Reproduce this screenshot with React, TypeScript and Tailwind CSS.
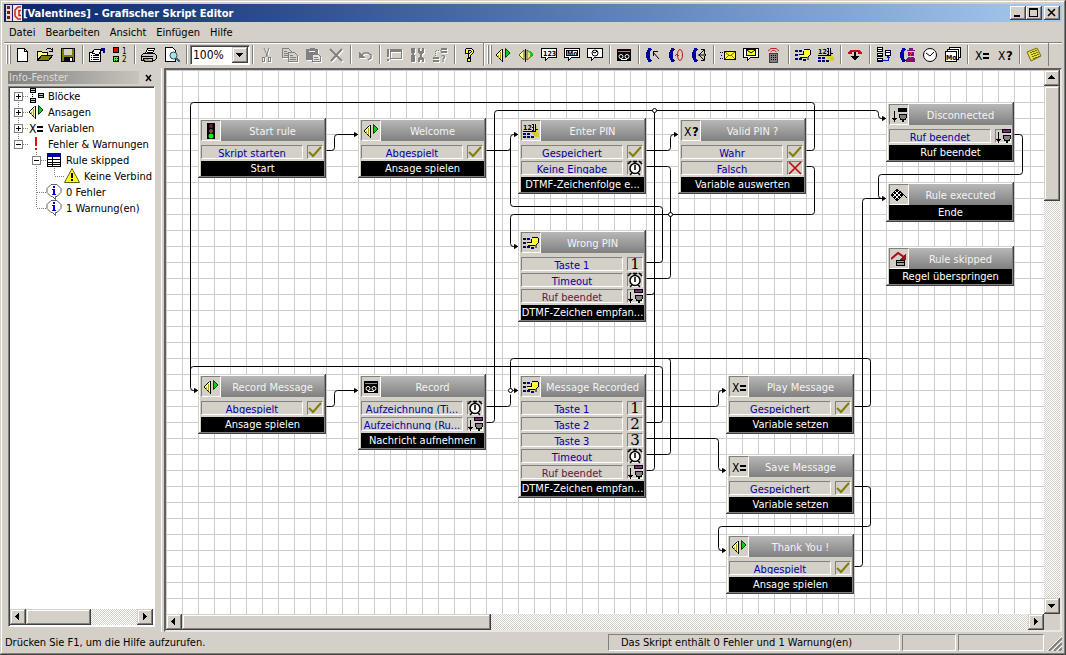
import { useState } from 'react'
import type { ReactNode } from 'react'

type Point = [number, number]

interface Port {
  label: string
  icon: string
  hangup?: boolean
}

interface Block {
  x: number
  y: number
  title: string
  icon: string
  kind: string
  ports: Port[]
}

interface TreeRow {
  label: string
  icon: string
  cells: string[]
}

const raised =
  'bg-[#d4d0c8] shadow-[inset_-1px_-1px_#404040,inset_1px_1px_#d4d0c8,inset_-2px_-2px_#808080,inset_2px_2px_#fff]'
const checker =
  'bg-[conic-gradient(#fff_25%,#d4d0c8_0_50%,#fff_0_75%,#d4d0c8_0)] bg-[size:2px_2px]'

const sans = '"DejaVu Sans Condensed", "DejaVu Sans", sans-serif'

const announce = (
  <>
    <path d="M7 3 1 8l6 6z" fill="#ffffa0" />
    <path d="M6.500 2.500 1 8l5.500 5.500" stroke="#000" shapeRendering="auto" />
    <path d="M7 2h1v13H7z" fill="#000" />
    <path d="M3 8h1v3H3zM5 5h1v7H5z" fill="#b0a000" />
    <path d="M10.500 1.500v9l4.500-4.500z" fill="#00d020" stroke="#004000" shapeRendering="auto" />
  </>
)

const handset = (
  <>
    <path d="M3 1h3v3H5v8h1v3H3v-2H2v-2H1V5h1V3h1z" fill="#0000a0" />
    <path d="M6 2h1v1H6zM6 13h1v1H6z" fill="#000" />
  </>
)

const bubble = <path d="M.5 1.500h15v9h-8l-3 3v-3h-4z" fill="#fff" stroke="#000" />

const hangupPlug = (color: string) => (
  <>
    <path d="M7 1h9v4H7z" fill="#000" />
    <path d="M8 2h7v2H8z" fill={color} />
    <path d="M8 7h8v4h-1v2h-2v2h-2v-2H9v-2H8z" fill="#000" />
    <path d="M9 8h6v3h-1v1h-4v-1H9z" fill="#808080" />
    <path d="M3 4h1v8H3zM1 11h5v1H5v1H4v2H3v-2H2v-1H1z" fill="#000" />
  </>
)

const icons: Record<string, ReactNode> = {
  app: (
    <>
      <path d="M0 0h6v16H0z" fill="#e8d8d0" />
      <path d="M1 1h3v3H1zM1 6h3v3H1zM1 11h3v3H1z" fill="#702020" />
      <path d="M7 0h9v16H7z" fill="#f4e8e4" />
      <path d="M15 2h-3L9 5v6l3 3h3M15 5.500h-2v5h2" stroke="#d02020" strokeWidth="1.500" shapeRendering="auto" />
    </>
  ),
  new: (
    <>
      <path d="M3.500 1.500h7l3 3v10h-10z" fill="#fff" stroke="#000" />
      <path d="M10.500 1.500v3h3" stroke="#000" />
    </>
  ),
  open: (
    <>
      <path d="M.5 13.500v-9h4l1 1h5v3" fill="#ffff80" stroke="#000" />
      <path d="M.5 13.500l4-5h11l-4 5z" fill="#808000" stroke="#000" />
      <path d="M9 3l2-2h2l2 2M15 1v3h-3" stroke="#000" />
    </>
  ),
  save: (
    <>
      <path d="M1.500 1.500h13v13h-13z" fill="#808000" stroke="#000" />
      <path d="M4 2h8v6H4z" fill="#d4d0c8" />
      <path d="M4 10h9v4H4z" fill="#000" />
      <path d="M10 11h2v3h-2z" fill="#fff" />
    </>
  ),
  props: (
    <>
      <path d="M.5 5.500h11v9H.5z" fill="#fff" stroke="#000" />
      <path d="M2 8h1v1H2zM4 8h6v1H4zM2 10h1v1H2zM4 10h6v1H4zM2 12h1v1H2zM4 12h6v1H4z" fill="#000" />
      <path d="M3 6l3-4h7l-3 5H6z" fill="#fff" stroke="#000" />
      <path d="M12 1h4v5h-2V4h-2z" fill="#000080" />
    </>
  ),
  lights: (
    <>
      <path d="M1.500.5h5v5h-5z" fill="#e00000" stroke="#000" />
      <path d="M1.500 9.500h5v5h-5z" fill="#40ff40" stroke="#000" />
      <path d="M3 11h1v1H3zM5 13h1v1H5zM5 11h1v1H5zM3 13h1v1H3z" fill="#000" />
      <text x="10" y="7" fontSize="8" fill="#000" fontFamily={sans}>1</text>
      <text x="10" y="15" fontSize="8" fill="#000" fontFamily={sans}>2</text>
    </>
  ),
  print: (
    <>
      <path d="M4.500 6.500l2-5h7l-2 5z" fill="#fff" stroke="#000" />
      <path d="M7 3h5M6 5h5" stroke="#000" />
      <path d="M.5 8.500l2-2h11l2 2v3l-2 2H.5z" fill="#c8c8c0" stroke="#000" />
      <path d="M0 9h12v1H0z" fill="#000" />
      <path d="M2.500 11.500h9v3h-8z" fill="#a0a090" stroke="#000" />
      <path d="M8 12h3v1H8z" fill="#e0e000" />
    </>
  ),
  preview: (
    <>
      <path d="M1.500.5h7l3 3v11h-10z" fill="#fff" stroke="#000" />
      <circle cx="9.500" cy="8.500" r="3.500" fill="#a0e8f0" stroke="#404040" shapeRendering="auto" />
      <path d="M12 11l4 4" stroke="#307080" strokeWidth="2" />
    </>
  ),
  cut: (
    <>
      <path d="M5 1l4 9M10 1l-3 9" stroke="#808080" shapeRendering="auto" />
      <path d="M3.500 10.500h2v4h-2zM9.500 10.500h2v4h-2z" stroke="#808080" />
    </>
  ),
  copy: (
    <>
      <path d="M.5 1.500h6l3 3v6h-9z" fill="#d4d0c8" stroke="#808080" />
      <path d="M6.500 5.500h6l3 3v6h-9z" fill="#d4d0c8" stroke="#808080" />
      <path d="M2 4h3v1H2zM2 6h4v1H2zM2 8h4v1H2zM8 8h3v1H8zM8 10h6v1H8zM8 12h6v1H8z" fill="#808080" />
    </>
  ),
  paste: (
    <>
      <path d="M1 2h3l1-1h4l1 1h3v11H1z" fill="#808080" />
      <path d="M7.500 7.500h6l2 2v5h-8z" fill="#e8e4dc" stroke="#808080" />
      <path d="M9 10h4v1H9zM9 12h5v1H9z" fill="#808080" />
      <path d="M4 4h6v1H4z" fill="#fff" />
    </>
  ),
  remove: <path d="M2 2l12 12M14 2 3 14" stroke="#808080" strokeWidth="2" shapeRendering="auto" />,
  undo: (
    <>
      <path d="M4 9l3-3h4l3 2v3l-3 2" stroke="#808080" strokeWidth="1.500" shapeRendering="auto" />
      <path d="M2 5v6h6z" fill="#808080" />
    </>
  ),
  window: (
    <>
      <path d="M1 2h2v8H1zM1 12h2v2H1z" fill="#808080" />
      <path d="M4.500 2.500h11v9h-11z" stroke="#808080" />
      <path d="M4 2h12v3H4z" fill="#808080" />
    </>
  ),
  tools: (
    <>
      <path d="M2 1h4v5H5v2h1v7H2V8h1V6H2z" fill="#808080" />
      <path d="M9 1h2v3h2V1h2v5l-2 1v3l2 1v4h-2v-2h-2v2H9v-4l2-1V7L9 6z" fill="#808080" />
    </>
  ),
  route: (
    <>
      <path d="M1 10h6v2H1zM1 13h6v2H1zM9 1h6v2H9zM9 4h6v2H9z" fill="#808080" />
      <path d="M3.500 9V3.500H9" stroke="#808080" strokeDasharray="1 1" />
      <text x="9" y="15" fontSize="9" fontWeight="bold" fill="#808080" fontFamily={sans}>?</text>
    </>
  ),
  help: (
    <>
      <path d="M4 6V3l2-2h4l2 2v3L9 9v1H7V8l3-3V4L9 3H7v3z" fill="#ffff20" stroke="#000" />
      <path d="M6.500 11.500h3v3h-3z" fill="#ffff20" stroke="#000" />
    </>
  ),
  announce,
  announceBoth: (
    <>
      <path d="M6 3 1 8l5 5z" fill="#ffffa0" stroke="#606000" shapeRendering="auto" />
      <path d="M7 2h1v13H7z" fill="#000" />
      <path d="M9 3v10l6-5z" fill="#e8e080" stroke="#606000" shapeRendering="auto" />
      <path d="M11.500 3v8l4-4z" fill="#00d020" />
    </>
  ),
  bubble123: (
    <>
      {bubble}
      <text x="2" y="9" fontSize="7" fontWeight="bold" fill="#000" fontFamily={sans}>123</text>
    </>
  ),
  bubbleMo: (
    <>
      {bubble}
      <path d="M2.500 3.500h11v5h-11z" fill="#fff" stroke="#000" />
      <text x="3" y="9" fontSize="7" fontWeight="bold" fill="#000" fontFamily={sans}>Mo</text>
    </>
  ),
  bubbleClock: (
    <>
      {bubble}
      <circle cx="8" cy="6" r="3" fill="#fff" stroke="#000" shapeRendering="auto" />
      <path d="M6 5l2 1 2-2" stroke="#000" shapeRendering="auto" />
    </>
  ),
  tape: (
    <>
      <path d="M1 2h14v12H1z" fill="#000" />
      <path d="M2 4h12v1H2z" fill="#20c0b0" />
      <circle cx="5" cy="9.500" r="2" stroke="#fff" shapeRendering="auto" />
      <circle cx="11" cy="9.500" r="2" stroke="#fff" shapeRendering="auto" />
      <path d="M5 12h6" stroke="#fff" />
    </>
  ),
  callIn: (
    <>
      {handset}
      <path d="M8 5l6 7" stroke="#000" shapeRendering="auto" />
      <path d="M8 4h5v1H9v4H8z" fill="#000" />
    </>
  ),
  callHold: (
    <>
      {handset}
      <ellipse cx="12" cy="8" rx="2.500" ry="5.500" stroke="#b02020" shapeRendering="auto" />
      <path d="M7 9l2-2 2 2" stroke="#b02020" shapeRendering="auto" />
    </>
  ),
  callSplit: (
    <>
      {handset}
      <path d="M7 8h8M8 8l5-5M8 8l5 5M10 2.500h3.500V6M10 13.500h3.500V10M13 6l2 2-2 2" stroke="#000" shapeRendering="auto" />
    </>
  ),
  mail: (
    <>
      <path d="M4.500 4.500h11v8h-11z" fill="#ffff20" stroke="#000" />
      <path d="M5 5l5 4 5-4M5 12l4-4M15 12l-4-4" stroke="#806000" shapeRendering="auto" />
      <path d="M0 5.500h3M1 8.500h2M0 11.500h3" stroke="#000" strokeDasharray="1 1" />
    </>
  ),
  mailBubble: (
    <>
      {bubble}
      <path d="M3.500 2.500h9v6h-9z" fill="#ffff20" stroke="#000" />
      <path d="M4 3l4 3 4-3" stroke="#000" shapeRendering="auto" />
    </>
  ),
  remote: (
    <>
      <path d="M2 4l3-2.500h5L13 4M4.500 5l2-1.500h2l2 1.500" stroke="#c02020" shapeRendering="auto" />
      <path d="M3.500 6.500h8v9h-8z" fill="#808080" stroke="#404040" />
      <path d="M5 8h1v1H5zM7 8h1v1H7zM9 8h1v1H9zM5 10h1v1H5zM7 10h1v1H7zM9 10h1v1H9zM5 12h1v1H5zM7 12h1v1H7zM9 12h1v1H9z" fill="#000" />
    </>
  ),
  dial: (
    <>
      <path d="M0 3h3v2H0zM4 3h3v2H4zM0 7h3v2H0zM0 11h3v2H0zM4 11h3v2H4zM8 12h3v2H8z" fill="#000080" />
      <path d="M5 8h4V4l1-1h5v5l-2 2H5z" fill="#ffff40" />
      <path d="M4 7.500h5M5 10.500h7M8.500 7V4M9 2.500h6M15.500 3v5" stroke="#000" />
      <path d="M15 8l-2 2v3" stroke="#000" shapeRendering="auto" />
    </>
  ),
  dial123: (
    <>
      <path d="M0 10h3v2H0zM4 10h3v2H4zM0 13h3v2H0zM4 13h3v2H4zM8 13h3v2H8z" fill="#000080" />
      <path d="M8 9h4V3h2v6l2 1v4h-4l-3-3z" fill="#d8d020" />
      <path d="M0 8.500h12M12.500 9V1M13 6.500h2" stroke="#000" />
      <text x="0" y="7" fontSize="7" fontWeight="bold" fill="#000" fontFamily={sans}>12</text>
      <path d="M9 1h2v7H9V7h1V5H9V4h1V2H9z" fill="#000" />
    </>
  ),
  hangup: (
    <>
      <path d="M1 7V5l3-2h8l3 2v2h-4V5H5v2z" fill="#c01020" />
      <path d="M7 5h2v6H7z" fill="#000" />
      <path d="M4 9h8l-4 5z" fill="#000" />
    </>
  ),
  blocks: (
    <>
      <path d="M1.500.5h5v4h-5zM1.500 6.500h5v3h-5zM1.500 11.500h5v3h-5zM9.500 3.500h5v5h-5z" fill="#fff" stroke="#000" />
      <path d="M1 2h6M10 5h5M1 8h6M1 13h6" stroke="#000060" />
      <path d="M7 13.500h5.500V10M11 11l1-2 2 2" stroke="#0020c0" />
    </>
  ),
  agent: (
    <>
      {handset}
      <path d="M10 1h4v2h2v1H8V3h2zM9 5h6v4H9zM7 15v-3l2-2h6l1 2v3z" fill="#801080" />
      <path d="M11 5h2v2h-1v2h-1V7h1V6h-1zM11 10h1v1h-1z" fill="#ff3030" />
    </>
  ),
  clock: (
    <>
      <circle cx="8" cy="8" r="6.500" fill="#fff" stroke="#000" shapeRendering="auto" />
      <path d="M4 6l4 3 4-4" stroke="#000" shapeRendering="auto" />
    </>
  ),
  calendar: (
    <>
      <path d="M4.500.5h11v10h-11z" fill="#fff" stroke="#000" />
      <path d="M2.500 2.500h11v10h-11z" fill="#fff" stroke="#000" />
      <path d="M.5 4.500h11v10H.5z" fill="#fff" stroke="#000" />
      <text x="1" y="13" fontSize="7" fontWeight="bold" fill="#000" fontFamily={sans}>Mo</text>
    </>
  ),
  assign: (
    <>
      <text x="1" y="13" fontSize="12" fill="#000" fontFamily={sans}>X</text>
      <path d="M9 6h6v2H9zM9 10h6v2H9z" fill="#000" />
    </>
  ),
  evaluate: (
    <>
      <text x="1" y="13" fontSize="12" fill="#000" fontFamily={sans}>X</text>
      <text x="9" y="13" fontSize="13" fontWeight="bold" fill="#000" fontFamily={sans}>?</text>
    </>
  ),
  note: (
    <>
      <path d="M1 5l10-4 4 8-10 5z" fill="#e8e040" stroke="#707000" shapeRendering="auto" />
      <path d="M4 6l7-3M5 8l7-3M6 10l7-3M7 12l7-3" stroke="#707000" />
    </>
  ),
  traffic: (
    <>
      <path d="M4 0h8v16H4z" fill="#000" />
      <circle cx="8" cy="3" r="2" fill="#702040" shapeRendering="auto" />
      <circle cx="8" cy="8" r="2" fill="#904840" shapeRendering="auto" />
      <circle cx="8" cy="13" r="2.500" fill="#00f020" shapeRendering="auto" />
    </>
  ),
  plug: hangupPlug('#000'),
  plugPort: hangupPlug('#802090'),
  finish: (
    <>
      <path d="M0 8l6-6 6 6-6 6z" fill="#fff" stroke="#000" shapeRendering="auto" />
      <path d="M5 3h2v2H5zM3 5h2v2H3zM7 5h2v2H7zM1 7h2v2H1zM5 7h2v2H5zM9 7h2v2H9zM3 9h2v2H3zM7 9h2v2H7zM5 11h2v2H5z" fill="#000" />
      <path d="M9 4l7 7" stroke="#000" shapeRendering="auto" />
    </>
  ),
  skip: (
    <>
      <path d="M0 8l7-6 6 4" stroke="#a01010" strokeWidth="2" shapeRendering="auto" />
      <path d="M15 2v7H9z" fill="#a01010" />
      <path d="M5.500 9.500h8v5h-8z" fill="#a0a0a0" stroke="#000" />
      <path d="M5 11h9v1H5z" fill="#000" />
    </>
  ),
  check: <path d="M2 8l4 4 8-9" stroke="#808000" strokeWidth="2" shapeRendering="auto" />,
  cross: <path d="M2 2l12 12M14 2 2 14" stroke="#c00000" strokeWidth="1.500" shapeRendering="auto" />,
  stopwatch: (
    <g shapeRendering="auto">
      <path d="M6 1.500h4M8 1v3M1 4l3-3M15 4l-3-3M3 15l2-2M13 15l-2-2" stroke="#000" strokeWidth="1.500" />
      <circle cx="8" cy="8.500" r="5" fill="#fff" stroke="#000" strokeWidth="1.500" />
      <path d="M8 5v5" stroke="#000" strokeWidth="1.500" />
    </g>
  ),
  error: <path d="M7 1h2v9H7zM7 12h2v2H7z" fill="#e01010" />,
  table: (
    <>
      <path d="M1.500 1.500h13v13h-13z" fill="#fff" stroke="#000" />
      <path d="M1 1h14v4H1z" fill="#0000a0" />
      <path d="M2 7.500h12M2 10.500h12M2 12.500h12M6.500 5v9" stroke="#000" />
    </>
  ),
  warning: (
    <>
      <path d="M8 .5l7.500 14H.5z" fill="#ffff20" stroke="#606000" shapeRendering="auto" />
      <path d="M7 5h2v5H7zM7 11h2v2H7z" fill="#000" />
    </>
  ),
  info: (
    <>
      <path d="M5 .5h6l4 4v4l-4 4H9.500v3l-3-3H5l-4-4v-4z" fill="#fff" stroke="#606060" shapeRendering="auto" />
      <path d="M7 2h2v2H7zM6 5h3v5h1v1H6v-1h1V6H6z" fill="#0000c0" />
    </>
  ),
  blockTree: (
    <>
      <path d="M2.500.5h5v4h-5zM2.500 10.500h5v4h-5zM10.500 5.500h5v4h-5z" fill="#b0d0b0" stroke="#000" />
      <path d="M2 2h6M2 12h6M10 7h6" stroke="#000" />
      <path d="M4.500 6v4" stroke="#000" strokeDasharray="1 1" />
    </>
  ),
}

function Icon({ name, disabled }: { name: string; disabled?: boolean }) {
  return (
    <svg
      viewBox="0 0 16 16"
      fill="none"
      shapeRendering="crispEdges"
      aria-hidden="true"
      className={disabled ? 'size-4 shrink-0 drop-shadow-[1px_1px_0_#fff]' : 'size-4 shrink-0'}
    >
      {icons[name]}
    </svg>
  )
}

const menu = ['Datei', 'Bearbeiten', 'Ansicht', 'Einfügen', 'Hilfe']

const fileTools = [['new', 'open', 'save'], ['props', 'lights'], ['print', 'preview']]
const editTools = [['cut', 'copy', 'paste', 'remove'], ['undo'], ['window', 'tools', 'route'], ['help']]
const blockTools = [
  ['announce', 'announceBoth', 'bubble123', 'bubbleMo', 'bubbleClock'],
  ['tape'],
  ['callIn', 'callHold', 'callSplit'],
  ['mail', 'mailBubble', 'remote'],
  ['dial', 'dial123'],
  ['hangup'],
  ['blocks', 'agent', 'clock', 'calendar'],
  ['assign', 'evaluate'],
  ['note'],
]

// cell codes: u = line up, d = line down, r = line right, + / - = expander
const tree: TreeRow[] = [
  { label: 'Blöcke', icon: 'blockTree', cells: ['dr+'] },
  { label: 'Ansagen', icon: 'announce', cells: ['udr+'] },
  { label: 'Variablen', icon: 'assign', cells: ['udr+'] },
  { label: 'Fehler & Warnungen', icon: 'error', cells: ['ur-'] },
  { label: 'Rule skipped', icon: 'table', cells: ['', 'udr-'] },
  { label: 'Keine Verbind', icon: 'warning', cells: ['', 'ud', 'ur'] },
  { label: '0 Fehler', icon: 'info', cells: ['', 'udr'] },
  { label: '1 Warnung(en)', icon: 'info', cells: ['', 'ur'] },
]

const ok = (label: string): Port => ({ label, icon: 'check' })

const blocks: Block[] = [
  { x: 32, y: 48, title: 'Start rule', icon: 'traffic', kind: 'Start', ports: [ok('Skript starten')] },
  { x: 192, y: 48, title: 'Welcome', icon: 'announce', kind: 'Ansage spielen', ports: [ok('Abgespielt')] },
  {
    x: 352, y: 48, title: 'Enter PIN', icon: 'dial123', kind: 'DTMF-Zeichenfolge e...',
    ports: [ok('Gespeichert'), { label: 'Keine Eingabe', icon: 'stopwatch' }],
  },
  {
    x: 512, y: 48, title: 'Valid PIN ?', icon: 'evaluate', kind: 'Variable auswerten',
    ports: [ok('Wahr'), { label: 'Falsch', icon: 'cross' }],
  },
  {
    x: 720, y: 32, title: 'Disconnected', icon: 'plug', kind: 'Ruf beendet',
    ports: [{ label: 'Ruf beendet', icon: 'plugPort' }],
  },
  { x: 720, y: 112, title: 'Rule executed', icon: 'finish', kind: 'Ende', ports: [] },
  { x: 720, y: 176, title: 'Rule skipped', icon: 'skip', kind: 'Regel überspringen', ports: [] },
  {
    x: 352, y: 160, title: 'Wrong PIN', icon: 'dial', kind: 'DTMF-Zeichen empfan...',
    ports: [
      { label: 'Taste 1', icon: '1' },
      { label: 'Timeout', icon: 'stopwatch' },
      { label: 'Ruf beendet', icon: 'plugPort', hangup: true },
    ],
  },
  { x: 32, y: 304, title: 'Record Message', icon: 'announce', kind: 'Ansage spielen', ports: [ok('Abgespielt')] },
  {
    x: 192, y: 304, title: 'Record', icon: 'tape', kind: 'Nachricht aufnehmen',
    ports: [
      { label: 'Aufzeichnung (Ti...', icon: 'stopwatch' },
      { label: 'Aufzeichnung (Ru...', icon: 'plugPort' },
    ],
  },
  {
    x: 352, y: 304, title: 'Message Recorded', icon: 'dial', kind: 'DTMF-Zeichen empfan...',
    ports: [
      { label: 'Taste 1', icon: '1' },
      { label: 'Taste 2', icon: '2' },
      { label: 'Taste 3', icon: '3' },
      { label: 'Timeout', icon: 'stopwatch' },
      { label: 'Ruf beendet', icon: 'plugPort', hangup: true },
    ],
  },
  { x: 560, y: 304, title: 'Play Message', icon: 'assign', kind: 'Variable setzen', ports: [ok('Gespeichert')] },
  { x: 560, y: 384, title: 'Save Message', icon: 'assign', kind: 'Variable setzen', ports: [ok('Gespeichert')] },
  { x: 560, y: 464, title: 'Thank You !', icon: 'announce', kind: 'Ansage spielen', ports: [ok('Abgespielt')] },
]

const wires: { points: Point[]; arrow?: boolean }[] = [
  { points: [[160, 80], [168, 80], [168, 64], [192, 64]], arrow: true },
  { points: [[320, 80], [344, 80], [344, 64], [352, 64]], arrow: true },
  { points: [[480, 80], [504, 80], [504, 64], [512, 64]], arrow: true },
  { points: [[480, 96], [504, 96], [504, 208], [480, 208]] },
  { points: [[480, 192], [496, 192], [496, 136], [344, 136], [344, 76]] },
  { points: [[640, 80], [648, 80], [648, 32], [24, 32], [24, 320], [32, 320]], arrow: true },
  { points: [[640, 96], [648, 96], [648, 144], [344, 144], [344, 176], [352, 176]], arrow: true },
  { points: [[320, 352], [328, 352], [328, 40], [712, 40], [712, 48], [720, 48]], arrow: true },
  { points: [[480, 224], [488, 224], [488, 216]] },
  { points: [[480, 400], [488, 400], [488, 40]] },
  { points: [[848, 64], [856, 64], [856, 104], [712, 104], [712, 128], [720, 128]], arrow: true },
  { points: [[688, 496], [696, 496], [696, 128], [720, 128]] },
  { points: [[160, 336], [168, 336], [168, 320], [192, 320]], arrow: true },
  { points: [[480, 352], [496, 352], [496, 296], [24, 296], [24, 304]] },
  { points: [[320, 336], [344, 336], [344, 324]] },
  { points: [[688, 336], [704, 336], [704, 288], [344, 288], [344, 320], [352, 320]], arrow: true },
  { points: [[480, 384], [504, 384], [504, 288], [500, 288]] },
  { points: [[480, 336], [552, 336], [552, 320], [560, 320]], arrow: true },
  { points: [[480, 368], [552, 368], [552, 400], [560, 400]], arrow: true },
  { points: [[688, 416], [704, 416], [704, 456], [552, 456], [552, 480], [560, 480]], arrow: true },
]

const joints: Point[] = [[488, 40], [504, 144], [344, 320]]

// Orthogonal polyline with small rounded corners
function wirePath(points: Point[]) {
  const r = 3
  let d = `M${points[0][0]} ${points[0][1]}`
  for (let i = 1; i < points.length - 1; i++) {
    const [px, py] = points[i - 1]
    const [x, y] = points[i]
    const [nx, ny] = points[i + 1]
    d += `L${x - Math.sign(x - px) * r} ${y - Math.sign(y - py) * r}`
    d += `Q${x} ${y} ${x + Math.sign(nx - x) * r} ${y + Math.sign(ny - y) * r}`
  }
  const [ex, ey] = points[points.length - 1]
  return `${d}L${ex} ${ey}`
}

function Wires() {
  return (
    <svg className="absolute inset-0 size-full" fill="none" stroke="#000" aria-hidden="true">
      <g transform="translate(0.5 0.5)">
        {wires.map(({ points, arrow }, i) => {
          const [x, y] = points[points.length - 1]
          return (
            <g key={i}>
              <path d={wirePath(points)} />
              {arrow && <path d={`M${x - 1} ${y}l-3-2v4z`} fill="#000" />}
            </g>
          )
        })}
        {joints.map(([x, y]) => (
          <circle key={`${x}-${y}`} cx={x} cy={y} r="2" fill="#fff" />
        ))}
      </g>
    </svg>
  )
}

function BlockNode({ block }: { block: Block }) {
  return (
    <section
      className="absolute w-32 bg-[#d4d0c8] p-0.5 pl-[3px] shadow-[inset_-1px_-1px_#404040,inset_1px_1px_#d4d0c8,inset_-2px_-2px_#808080,inset_2px_2px_#fff]"
      style={{ left: block.x, top: block.y }}
    >
      <header className="flex h-[21px] bg-linear-to-b from-[#b8b8b8] to-[#808080]">
        <span className="flex w-5 items-center justify-center border border-t-[#808080] border-r-white border-b-white border-l-[#808080] bg-[#d4d0c8]">
          <Icon name={block.icon} />
        </span>
        <h2 className="flex-1 text-center leading-6 whitespace-nowrap text-[#f4f4f4]">{block.title}</h2>
      </header>
      {block.ports.length > 0 && (
        <ul className="pt-1">
          {block.ports.map(port => (
            <li key={port.label} className="flex h-4 gap-1 pr-px">
              <span
                className={`h-3.5 flex-1 overflow-hidden border border-t-[#808080] border-r-white border-b-white border-l-[#808080] text-center leading-[15px] whitespace-nowrap ${port.hangup ? 'text-[#602038]' : 'text-[#0000a0]'}`}
              >
                {port.label}
              </span>
              <span className="flex h-3.5 w-4 items-center justify-center border border-t-[#808080] border-r-white border-b-white border-l-[#808080]">
                {icons[port.icon] ? (
                  <Icon name={port.icon} />
                ) : (
                  <span className="font-['DejaVu_Serif',serif] text-[15px] leading-none text-black">{port.icon}</span>
                )}
              </span>
            </li>
          ))}
        </ul>
      )}
      <footer className="h-[15px] overflow-hidden bg-black text-center leading-4 whitespace-nowrap text-white">
        {block.kind}
      </footer>
    </section>
  )
}

const arrows: Record<string, string> = {
  left: 'M9 4v7L5 7.500z',
  right: 'M6 4v7l4-3.500z',
  up: 'M4 9h7L7.500 5z',
  down: 'M4 6h7l-3.500 4z',
}

function ArrowButton({ dir, label }: { dir: string; label: string }) {
  return (
    <button type="button" aria-label={label} className={`size-4 shrink-0 ${raised}`}>
      <svg viewBox="0 0 16 16" className="size-4" shapeRendering="crispEdges">
        <path d={arrows[dir]} />
      </svg>
    </button>
  )
}

function HScroll({ thumb }: { thumb: string }) {
  return (
    <div className={`flex h-4 min-w-0 flex-1 ${checker}`}>
      <ArrowButton dir="left" label="Nach links" />
      <div className="flex-1">
        <div className={`h-4 ${raised} ${thumb}`} />
      </div>
      <ArrowButton dir="right" label="Nach rechts" />
    </div>
  )
}

function Separator() {
  return <span className="mx-0.5 h-[19px] w-0.5 shrink-0 border-l border-[#808080] bg-white" />
}

function Grip() {
  return (
    <span className="flex shrink-0 gap-px">
      <span className="h-[19px] w-0.5 border-r border-[#808080] bg-white" />
      <span className="h-[19px] w-0.5 border-r border-[#808080] bg-white" />
    </span>
  )
}

function ToolGroups({ groups, disabled = [] }: { groups: string[][]; disabled?: string[] }) {
  return (
    <>
      {groups.map((group, i) => (
        <div key={group[0]} className="flex items-center">
          {i > 0 && <Separator />}
          {group.map(name => (
            <button
              key={name}
              type="button"
              aria-label={name}
              disabled={disabled.includes(name)}
              className="flex h-[22px] w-[23px] items-center pl-[3px]"
            >
              <Icon name={name} disabled={disabled.includes(name)} />
            </button>
          ))}
        </div>
      ))}
    </>
  )
}

function Toolbar() {
  const [zoom, setZoom] = useState('100%')

  return (
    <div className="flex h-[26px] items-center overflow-hidden border-t border-[#808080] pb-0.5 pl-0.5 shadow-[inset_0_1px_#fff]">
      <Grip />
      <ToolGroups groups={fileTools} />
      <Separator />
      <label className="relative flex h-5 w-[60px] shrink-0 border border-t-[#808080] border-r-white border-b-white border-l-[#808080] bg-white shadow-[inset_1px_1px_#404040]">
        <select
          aria-label="Zoom"
          value={zoom}
          onChange={e => setZoom(e.target.value)}
          className="w-full appearance-none pl-0.5 text-xs outline-none"
        >
          <option>50%</option>
          <option>100%</option>
          <option>200%</option>
        </select>
        <span className={`pointer-events-none absolute top-px right-px h-4 w-4 ${raised}`}>
          <svg viewBox="0 0 16 16" className="size-4" shapeRendering="crispEdges">
            <path d="M4 6h7l-3.500 4z" />
          </svg>
        </span>
      </label>
      <Separator />
      <ToolGroups
        groups={editTools}
        disabled={['cut', 'copy', 'paste', 'remove', 'undo', 'window', 'tools', 'route']}
      />
      <span className="mr-0.5 ml-0.5 h-[23px] w-0.5 shrink-0 border-l border-[#808080] bg-white" />
      <Grip />
      <ToolGroups groups={blockTools} />
      <span className="ml-0.5 h-[23px] w-px bg-[#808080]" />
    </div>
  )
}

function TreeCell({ code }: { code: string }) {
  const expander = code.includes('+') || code.includes('-')
  return (
    <svg viewBox="0 0 18 16" className="h-4 w-[18px] shrink-0" shapeRendering="crispEdges" fill="none" aria-hidden="true">
      <g stroke="#808080" strokeDasharray="1 1">
        {code.includes('u') && <path d="M8.500 0v8" />}
        {code.includes('d') && <path d="M8.500 8v8" />}
        {code.includes('r') && <path d="M9 8.500h9" />}
      </g>
      {expander && (
        <>
          <path d="M4.500 4.500h8v8h-8z" fill="#fff" stroke="#808080" />
          <path d="M6 8.500h5" stroke="#000" />
          {code.includes('+') && <path d="M8.500 6v5" stroke="#000" />}
        </>
      )}
    </svg>
  )
}

function InfoPanel() {
  return (
    <aside className="flex w-40 shrink-0 flex-col pt-[3px] pr-[9px] pb-[5px] pl-1 shadow-[inset_-2px_0_#d4d0c8,inset_-3px_0_#fff]">
      <div className="flex h-[15px] items-start">
        <h2 className="h-[13px] flex-1 bg-linear-to-r from-[#808080] to-[#c8c4bc] pl-px leading-[13px] text-[#e0dcd4]">
          Info-Fenster
        </h2>
        <button type="button" aria-label="Schließen" className="ml-1 flex h-[13px] w-3 items-center justify-center">
          <svg viewBox="0 0 8 8" className="size-2">
            <path d="M1 1l5 6M6 1 1 7" stroke="#000" strokeWidth="1.500" />
          </svg>
        </button>
      </div>
      <div className="flex min-h-0 flex-1 flex-col border border-t-[#808080] border-r-white border-b-white border-l-[#808080] bg-white p-px shadow-[inset_1px_1px_#404040]">
        <ul className="flex-1 overflow-hidden">
          {tree.map(row => (
            <li key={row.label} className="flex h-4 whitespace-nowrap">
              {row.cells.map((code, i) => (
                <TreeCell key={i} code={code} />
              ))}
              <Icon name={row.icon} />
              <span className="pl-1 leading-[18px]">{row.label}</span>
            </li>
          ))}
        </ul>
        <div className="flex">
          <HScroll thumb="w-[59%]" />
        </div>
      </div>
    </aside>
  )
}

function Canvas() {
  return (
    <main className="flex min-w-0 flex-1 flex-col border-2 border-t-[#606060] border-r-[#e8e8e0] border-b-[#e8e8e0] border-l-[#606060]">
      <div className="flex min-h-0 flex-1">
        <div className="relative flex-1 overflow-hidden bg-white bg-[linear-gradient(#ccc_1px,transparent_1px),linear-gradient(90deg,#ccc_1px,transparent_1px)] bg-[size:16px_16px]">
          <Wires />
          {blocks.map(block => (
            <BlockNode key={`${block.x}-${block.y}`} block={block} />
          ))}
        </div>
        <div className={`flex w-4 flex-col ${checker}`}>
          <ArrowButton dir="up" label="Nach oben" />
          <div className="flex-1">
            <div className={`h-[22.5%] ${raised}`} />
          </div>
          <ArrowButton dir="down" label="Nach unten" />
        </div>
      </div>
      <div className="flex">
        <HScroll thumb="w-[36.5%]" />
        <span className="w-4 bg-[#d4d0c8]" />
      </div>
    </main>
  )
}

const captionButton =
  'flex h-3.5 w-4 items-center justify-center bg-[#d4d0c8] shadow-[inset_-1px_-1px_#404040,inset_1px_1px_#fff,inset_-2px_-2px_#808080]'

function TitleBar() {
  return (
    <header className="flex h-[18px] items-center bg-linear-to-r from-[#0a246a] to-[#a6caf0] pr-0.5 pl-0.5">
      <Icon name="app" />
      <h1 className="flex-1 pt-0.5 pl-px leading-4 font-bold text-white">[Valentines] - Grafischer Skript Editor</h1>
      <button type="button" aria-label="Minimieren" className={captionButton}>
        <svg viewBox="0 0 16 14" className="h-3.5 w-4" shapeRendering="crispEdges">
          <path d="M4 9h6v2H4z" />
        </svg>
      </button>
      <button type="button" aria-label="Maximieren" className={captionButton}>
        <svg viewBox="0 0 16 14" className="h-3.5 w-4" shapeRendering="crispEdges" fill="none">
          <path d="M3.500 3.500h8v7h-8z" stroke="#000" />
          <path d="M3 2h9v2H3z" fill="#000" />
        </svg>
      </button>
      <button type="button" aria-label="Schließen" className={`ml-0.5 ${captionButton}`}>
        <svg viewBox="0 0 16 14" className="h-3.5 w-4">
          <path d="M4 3l7 7M11 3l-7 7" stroke="#000" strokeWidth="1.500" />
        </svg>
      </button>
    </header>
  )
}

const pane = 'h-[17px] border border-t-[#808080] border-r-white border-b-white border-l-[#808080]'

function StatusBar() {
  return (
    <footer className="flex h-5 items-center gap-0.5 pt-px pl-px">
      <p className="flex-1 leading-[17px]">Drücken Sie F1, um die Hilfe aufzurufen.</p>
      <p className={`w-[292px] pl-3 leading-[15px] ${pane}`}>Das Skript enthält 0 Fehler und 1 Warnung(en)</p>
      <span className={`w-[54px] ${pane}`} />
      <span className={`w-[86px] ${pane}`} />
      <svg viewBox="0 0 16 16" className="size-4" fill="none" aria-hidden="true">
        <path d="M3 16 16 3M8 16l8-8M13 16l3-3" stroke="#808080" strokeWidth="2" />
        <path d="M1 16 16 1M6 16 16 6M11 16l5-5" stroke="#fff" />
      </svg>
    </footer>
  )
}

export default function App() {
  return (
    <div className="flex h-screen flex-col overflow-hidden bg-[#d4d0c8] p-1 pb-[3px] font-['DejaVu_Sans_Condensed','DejaVu_Sans',sans-serif] text-[11px] text-black shadow-[inset_-1px_-1px_#404040,inset_1px_1px_#d4d0c8,inset_-2px_-2px_#808080,inset_2px_2px_#fff]">
      <TitleBar />
      <nav className="flex h-5 items-center gap-2.5 pt-0.5 pl-[5px]">
        {menu.map(item => (
          <button key={item} type="button">
            {item}
          </button>
        ))}
      </nav>
      <Toolbar />
      <div className="flex min-h-0 flex-1">
        <InfoPanel />
        <Canvas />
      </div>
      <StatusBar />
    </div>
  )
}
